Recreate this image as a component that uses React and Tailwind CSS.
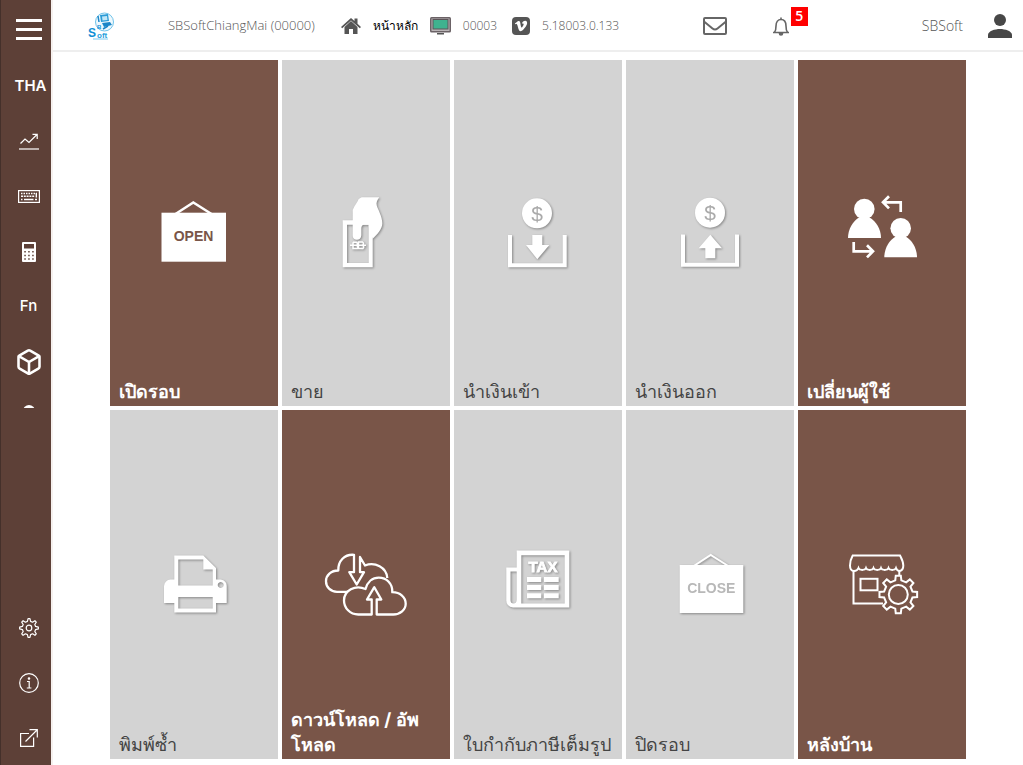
import React from "react";
import { FaVimeoV } from "react-icons/fa";
import { FiBox } from "react-icons/fi";

// ---------- helpers ----------
const gearPath = (cx, cy, outer, inner, teeth, root = 0.27, tip = 0.17) => {
  const step = (Math.PI * 2) / teeth;
  const points = [];
  for (let i = 0; i < teeth; i++) {
    const a = i * step - Math.PI / 2;
    [
      [inner, -root],
      [outer, -tip],
      [outer, tip],
      [inner, root],
    ].forEach(([r, k]) => {
      points.push(`${cx + r * Math.cos(a + k * step)} ${cy + r * Math.sin(a + k * step)}`);
    });
  }
  return `M${points.join("L")}Z`;
};

// ---------- header icons ----------
const Logo = () => (
  <svg viewBox="0 0 27 28" className="h-7 w-[27px] shrink-0" aria-label="SBSoft logo">
    <circle cx="16.500" cy="10" r="9" fill="#eef8fd" stroke="#6fc3ea" strokeWidth="1" />
    <path d="M12 3l8-1 1 7-8 1z" fill="#2b9bd6" />
    <path d="M14 4.500l5-.5.5 4-5 .5z" fill="#bfe6f7" />
    <path d="M14 11l8-1 2 3-8 2z" fill="#1b86c8" />
    <path d="M11 10l-1-6M20 14l-5 3" stroke="#1b86c8" strokeWidth="1.500" />
    <text x="0" y="25" fontSize="12" fontWeight="700" fill="#0f8fd6" fontFamily="Liberation Sans, sans-serif">S</text>
    <text x="9" y="17" fontSize="6" fontWeight="700" fill="#0f8fd6" fontFamily="Liberation Sans, sans-serif">B</text>
    <text x="9" y="26" fontSize="8" fontWeight="700" fill="#27a0dc" fontFamily="Liberation Sans, sans-serif">oft</text>
    <path d="M5 27h15" stroke="#7ccaf0" strokeWidth="1" />
  </svg>
);

const HomeIcon = () => (
  <svg viewBox="0 0 20 18" className="h-[18px] w-5 shrink-0" fill="#555">
    <path d="M10 1L0 10l1.200 1.200L10 3.600l8.800 7.600L20 10l-3.500-3.200V1.500h-3v2.600z" />
    <path d="M10 4L3.500 10V17H8v-5h4v5h4.500v-7z" />
  </svg>
);

const MonitorIcon = () => (
  <svg viewBox="0 0 21 18" className="h-[18px] w-[21px] shrink-0">
    <rect x="0" y="0" width="21" height="15.500" rx="1.500" fill="#6b6266" />
    <rect x="1.500" y="1.500" width="18" height="12.500" fill="#b9b4b6" />
    <rect x="3" y="2.500" width="15" height="9.500" fill="#3fb28f" stroke="#5c5458" />
    <path d="M7 16h7v1.500H7z" fill="#555" />
  </svg>
);

const VimeoIcon = () => (
  <span className="flex size-[18px] shrink-0 items-center justify-center rounded bg-[#555]">
    <FaVimeoV size={14} color="#fff" />
  </span>
);

const MailIcon = () => (
  <svg viewBox="0 0 24 18" className="h-[18px] w-6" fill="none" stroke="#666" strokeWidth="2">
    <rect x="1" y="1" width="22" height="16" rx="1" />
    <path d="M1 4.500l8.500 7q2.500 2 5 0l8.500-7" />
  </svg>
);

const BellIcon = () => (
  <svg viewBox="0 0 18 19" className="h-[19px] w-[18px]" fill="none" stroke="#666" strokeWidth="1.600">
    <path d="M1 15.500h16M2.500 15.300C4 13.500 4 12 4 9c0-4 2-6.500 5-6.500S14 5 14 9c0 3 0 4.500 1.500 6.300M9 2.500V.5" />
    <path d="M7.500 16.500a1.500 1.500 0 0 0 3 0z" fill="#666" />
  </svg>
);

const UserIcon = () => (
  <svg viewBox="0 0 24 24" className="h-6 w-6" fill="currentColor">
    <circle cx="12" cy="6" r="6" />
    <path d="M0 24v-3c0-4 7-6 12-6s12 2 12 6v3z" />
  </svg>
);

// ---------- sidebar icons ----------
const ChartIcon = () => (
  <svg viewBox="0 0 20 17" className="h-[17px] w-5" fill="none" stroke="#fff" strokeWidth="1.200">
    <path d="M1.500 10.500L6 6l4 3.500L18 1.500M13.500 1.300h4.700V6" />
    <path d="M0 16h20" />
  </svg>
);

const KeyboardIcon = () => (
  <svg viewBox="0 0 22 13" className="h-[13px] w-[22px]" fill="none" stroke="#fff">
    <rect x=".6" y=".6" width="20.800" height="11.800" strokeWidth="1.200" />
    <path d="M3 3.500h16" strokeWidth="1.500" strokeDasharray="1.500 1" />
    <path d="M3 6.300h13.500" strokeWidth="1.500" strokeDasharray="2 .8" />
    <path d="M3 9.500h1.500M6 9.500h9.500M17 9.500h2M18.300 3v4.500" strokeWidth="1.400" />
  </svg>
);

const CalculatorIcon = () => (
  <svg viewBox="0 0 14 20" className="h-5 w-[14px]">
    <rect width="14" height="20" rx="1" fill="#fff" />
    <path
      fill="#5d4037"
      d="M2 2h10v4.500H2zM2.300 9h1.500v1.500H2.300zM6.200 9h1.500v1.500H6.200zM10.200 9h1.500v1.500h-1.500zM2.300 12.700h1.500v1.500H2.300zM6.200 12.700h1.500v1.500H6.200zM10.200 12.700h1.500v1.500h-1.500zM2.300 16.200h1.500v1.500H2.300zM6.200 16.200h1.500v1.500H6.200zM10.200 16.200h1.500v1.500h-1.500z"
    />
  </svg>
);

const SettingsIcon = () => (
  <svg viewBox="0 0 20 20" className="h-5 w-5" fill="none" stroke="#fff" strokeWidth="1.200" strokeLinejoin="round">
    <path d={gearPath(10, 10, 9.4, 6.8, 8, 0.3, 0.13)} />
    <circle cx="10" cy="10" r="2.800" />
  </svg>
);

const InfoIcon = () => (
  <svg viewBox="0 0 20 20" className="h-5 w-5" fill="none" stroke="#fff" strokeWidth="1.200">
    <circle cx="10" cy="10" r="9.300" />
    <path d="M8 8.500h2.200V15M7.800 15h4.600" />
    <circle cx="10" cy="5.500" r=".7" fill="#fff" />
  </svg>
);

const ExternalIcon = () => (
  <svg viewBox="0 0 18 18" className="size-[18px]" fill="none" stroke="#fff" strokeWidth="1.200">
    <path d="M9 4.500H.6v12.900h13V8.500M5.500 12.500L17 1M9.500.7h7.800v7.800" />
  </svg>
);

// ---------- tile icons, all on a 100x100 box ----------
const OpenIcon = () => (
  <>
    <path d="M31.500 31L49.300 19.500 67.500 31" fill="none" stroke="#fff" strokeWidth="2.500" />
    <rect x="17.500" y="29.700" width="64.500" height="49" fill="#fff" />
    <text x="49.500" y="58" textAnchor="middle" fontSize="14" fontWeight="700" fill="#795548" fontFamily="Liberation Sans, sans-serif">OPEN</text>
  </>
);

const SellIcon = () => (
  <>
    <path fillRule="evenodd" fill="#fff" d="M26.700 37.300h30v47h-30zM31 41.700V80h21.700V41.700z" />
    <path fill="#fff" d="M45.700 14.300h17.600c-2 3-3.300 5-2.600 8 1 4 5.600 11 5.600 18 0 6-5 11-9.600 15.500L52.700 44v-2.300h-4c-3 0-3.400 2-3.400 5v5.500c0 6-8.600 6-8.600.500V27c2-5 5-8 6-11z" />
    <path fill="none" stroke="#fff" strokeWidth="1.500" d="M34 62.300h16M37 59.300v6.300h10M37 59.300h3.500q2 1.500 0 3 2.500 1.500.5 3.300M42.500 66v-7h4q2 1.500 0 3.300 2.500 1.500 0 3.500" />
  </>
);

const CashInIcon = () => (
  <>
    <circle cx="49" cy="30.300" r="15" fill="#fff" />
    <text x="49" y="37.500" textAnchor="middle" fontSize="21" fill="#aaa" fontFamily="Liberation Sans, sans-serif">$</text>
    <path fill="#fff" d="M44.300 52h10v10h7L49.300 76.300 38 62h6.300z" />
    <path fill="none" stroke="#fff" strokeWidth="4" d="M22 52v30.300h54.700V52" />
  </>
);

const CashOutIcon = () => (
  <>
    <circle cx="50" cy="29.700" r="15" fill="#fff" />
    <text x="50" y="37" textAnchor="middle" fontSize="21" fill="#aaa" fontFamily="Liberation Sans, sans-serif">$</text>
    <path fill="#fff" d="M50.300 51.700L62 65.300h-6.700v10h-10v-10h-6.600z" />
    <path fill="none" stroke="#fff" strokeWidth="4" d="M23 51.500v30.300h54V51.500" />
  </>
);

const SwitchUserIcon = () => (
  <>
    <g fill="#fff">
      <circle cx="32.300" cy="26" r="10.300" />
      <path d="M16 55c0-9 5-17 11-20.500h10.500C44 38 49 46 49 55z" />
      <circle cx="68.700" cy="45.300" r="10.300" />
      <path d="M52.300 74.200c0-9 5-17 11-20.500H74c6 3.500 11 11.500 11 20.500z" />
    </g>
    <path fill="none" stroke="#fff" strokeWidth="2.700" d="M68.700 29v-9.700H51M57 13.200l-6 6.100 6 6.100M21.700 59v9.300H40M35 62.200l6 6.100-6 6.100" />
  </>
);

const PrintIcon = () => (
  <path
    fill="#fff"
    fillRule="evenodd"
    d="M30.300 20.500h29L72 33v11.500h4.700q6 1 6 6.500v17H72v9.500H30.300V68H20V51q1-6 6.500-6.500h3.800zM34.300 24.500v26h34.400v-16h-9.400v-10zM34.300 62v11.500h34.400V62zM76.700 47a3 3 0 1 0 .01 0z"
  />
);

const CloudIcon = () => (
  <g fill="none" stroke="#fff" strokeWidth="2.300" strokeLinejoin="round">
    <path d="M32 56.800H21C14.500 56.800 10 52 10 46.200S15 35.500 22.300 35.500C22 26 28.500 19 38 19.800v17.400h-4.700l7.400 12.300L48 37.200h-4V22l5 8.500c10-4 21.500 2 22.300 12.500" />
    <path d="M55.700 79.500H42.300C34 79.500 28 73 28 65.500c0-10 11-16 21.500-11.500 2-7 7-11.300 13.200-11.300 8 0 14 6 13.600 14.500 8 0 13.400 5 13.400 11.500 0 6-5.500 10.800-12.400 10.800H60.700v-15h4.600l-7-12.300-7.300 12.300h4.700z" />
  </g>
);

const TaxIcon = () => (
  <>
    <path fill="#fff" fillRule="evenodd" d="M28.700 15.500h52.600v57H25q-6.700-1-6.700-7v-33h10.400zM33.300 20.200v48.300h43.400V20.200zM22.500 36.500V65q0 3.500 3 3.500t3.200-3.500V36.500z" />
    <text x="55" y="36.500" textAnchor="middle" fontSize="15" fontWeight="700" fill="#fff" stroke="#fff" strokeWidth=".8" fontFamily="Liberation Sans, sans-serif">TAX</text>
    <path fill="#fff" d="M39 42h14.300v5H39zM56 42h14.700v5H56zM39 50h14.300v5H39zM56 50h14.700v5H56zM39 58.300h14.300v5H39zM56 58.300h14.700v5H56z" />
  </>
);

const CloseIcon = () => (
  <>
    <path d="M33 31.500L50.700 20 69 31.500" fill="none" stroke="#fff" strokeWidth="2" />
    <rect x="19.700" y="30" width="63.600" height="48" fill="#fff" />
    <text x="51.300" y="58" textAnchor="middle" fontSize="14" fontWeight="700" fill="#b8b8b8" fontFamily="Liberation Sans, sans-serif">CLOSE</text>
  </>
);

const StoreIcon = () => (
  <g fill="none" stroke="#fff" strokeWidth="2">
    <path d="M20.700 20.500H68c1.500 3 3.300 6 3.300 10 0 3-1 5-3.600 5.500-1.700 0-3-1-3.700-3-1 2.500-6.500 2.500-7.500 0-1 2.500-6.500 2.500-7.500 0-1 2.500-6.500 2.500-7.500 0-1 2.500-6.500 2.500-7.500 0-1 2.500-6.500 2.500-7.500 0-1 2.500-2.500 3-4.500 3-3 0-4-2-4-5.500 0-4 1-7 2.700-10z" />
    <path d="M21.500 36v32.500H51M67.300 36v4" />
    <rect x="28.500" y="43.800" width="17" height="11.500" />
    <path d={gearPath(66.3, 59.5, 19, 14.5, 8)} />
    <circle cx="66.300" cy="59.500" r="9.500" />
  </g>
);

const tiles = [
  { label: "เปิดรอบ", Icon: OpenIcon, dark: true },
  { label: "ขาย", Icon: SellIcon },
  { label: "นำเงินเข้า", Icon: CashInIcon },
  { label: "นำเงินออก", Icon: CashOutIcon },
  { label: "เปลี่ยนผู้ใช้", Icon: SwitchUserIcon, dark: true },
  { label: "พิมพ์ซ้ำ", Icon: PrintIcon },
  { label: "ดาวน์โหลด / อัพ\nโหลด", Icon: CloudIcon, dark: true },
  { label: "ใบกำกับภาษีเต็มรูป", Icon: TaxIcon },
  { label: "ปิดรอบ", Icon: CloseIcon },
  { label: "หลังบ้าน", Icon: StoreIcon, dark: true },
];

const topMenu = [
  { name: "Language", content: <span className="pl-1 text-[15px] font-semibold">THA</span> },
  { name: "Reports", content: <ChartIcon /> },
  { name: "Keyboard", content: <KeyboardIcon /> },
  { name: "Calculator", content: <CalculatorIcon /> },
  { name: "Functions", content: <span className="text-[15px] font-medium">Fn</span> },
  { name: "Products", content: <FiBox size={28} strokeWidth={2.2} /> },
  { name: "Account", content: <UserIcon /> },
];

const bottomMenu = [
  { name: "Settings", content: <SettingsIcon /> },
  { name: "About", content: <InfoIcon /> },
  { name: "Open in new window", content: <ExternalIcon /> },
];

const MenuButton = ({ name, children }) => (
  <button type="button" aria-label={name} className="flex h-[55px] w-full shrink-0 items-center justify-center">
    {children}
  </button>
);

const Sidebar = () => (
  <nav className="sticky top-0 flex h-screen w-[53px] shrink-0 flex-col border-r-2 border-l border-r-[#f6f1ef] border-l-[#44302a] bg-[#5d4037] pl-[5px] text-white">
    <button type="button" aria-label="Menu" className="flex h-[59px] shrink-0 flex-col items-center justify-center gap-[6px]">
      <span className="h-[3px] w-[26px] bg-white" />
      <span className="h-[3px] w-[26px] bg-white" />
      <span className="h-[3px] w-[26px] bg-white" />
    </button>

    {/* the last entry is cut off by the list's height */}
    <div className="flex max-h-[349px] flex-col overflow-hidden">
      {topMenu.map((item) => (
        <MenuButton key={item.name} name={item.name}>{item.content}</MenuButton>
      ))}
    </div>

    <div className="mt-auto flex flex-col">
      {bottomMenu.map((item) => (
        <MenuButton key={item.name} name={item.name}>{item.content}</MenuButton>
      ))}
    </div>
  </nav>
);

const Header = () => (
  <header className="flex h-[52px] items-center border-b-2 border-[#eee] pt-[2px] pr-[11px] pl-[35px] font-['Open_Sans','Noto_Sans',sans-serif] text-[13px] font-light whitespace-nowrap text-[#555]">
    <Logo />
    <span className="ml-[53px]">SBSoftChiangMai (00000)</span>
    <a href="#home" className="ml-[26px] flex items-center gap-3 text-xs font-normal text-black">
      <HomeIcon />
      หน้าหลัก
    </a>
    <span className="ml-3 flex items-center gap-3 text-xs">
      <MonitorIcon />
      00003
    </span>
    <span className="ml-[15px] flex items-center gap-3 text-xs">
      <VimeoIcon />
      5.18003.0.133
    </span>

    <button type="button" aria-label="Messages" className="ml-auto">
      <MailIcon />
    </button>
    <button type="button" aria-label="Notifications" className="relative ml-[45px]">
      <BellIcon />
      <span className="absolute -top-[10px] left-[19px] flex h-[19px] w-[17px] items-center justify-center bg-[#f00] text-sm font-semibold text-white">
        5
      </span>
    </button>
    <span className="ml-[132px] text-sm">SBSoft</span>
    <button type="button" aria-label="Profile" className="ml-[25px] text-[#474747]">
      <UserIcon />
    </button>
  </header>
);

const Tile = ({ label, Icon, dark }) => (
  <button
    type="button"
    className={`grid text-left text-lg ${dark ? "bg-[#795548] font-bold text-white" : "bg-[#d3d3d3] font-medium text-[#444]"}`}
  >
    <svg
      viewBox="0 0 100 100"
      className={`col-start-1 row-start-1 size-[100px] place-self-center ${dark ? "" : "drop-shadow-[1px_1px_1px_#888]"}`}
    >
      <Icon />
    </svg>
    <span className="col-start-1 row-start-1 self-end pb-[2px] pl-[9px] leading-[25px] whitespace-pre-line">{label}</span>
  </button>
);

const App = () => {
  return (
    <div className="flex min-h-screen bg-white font-['Inter','Noto_Sans',sans-serif]">
      <Sidebar />
      <div className="flex min-w-0 flex-1 flex-col">
        <Header />
        <main className="grid flex-1 grid-cols-5 grid-rows-[346fr_349fr] gap-1 px-[57px] pt-2 pb-[6px]">
          {tiles.map((tile) => (
            <Tile key={tile.label} {...tile} />
          ))}
        </main>
      </div>
    </div>
  );
};

export default App;
